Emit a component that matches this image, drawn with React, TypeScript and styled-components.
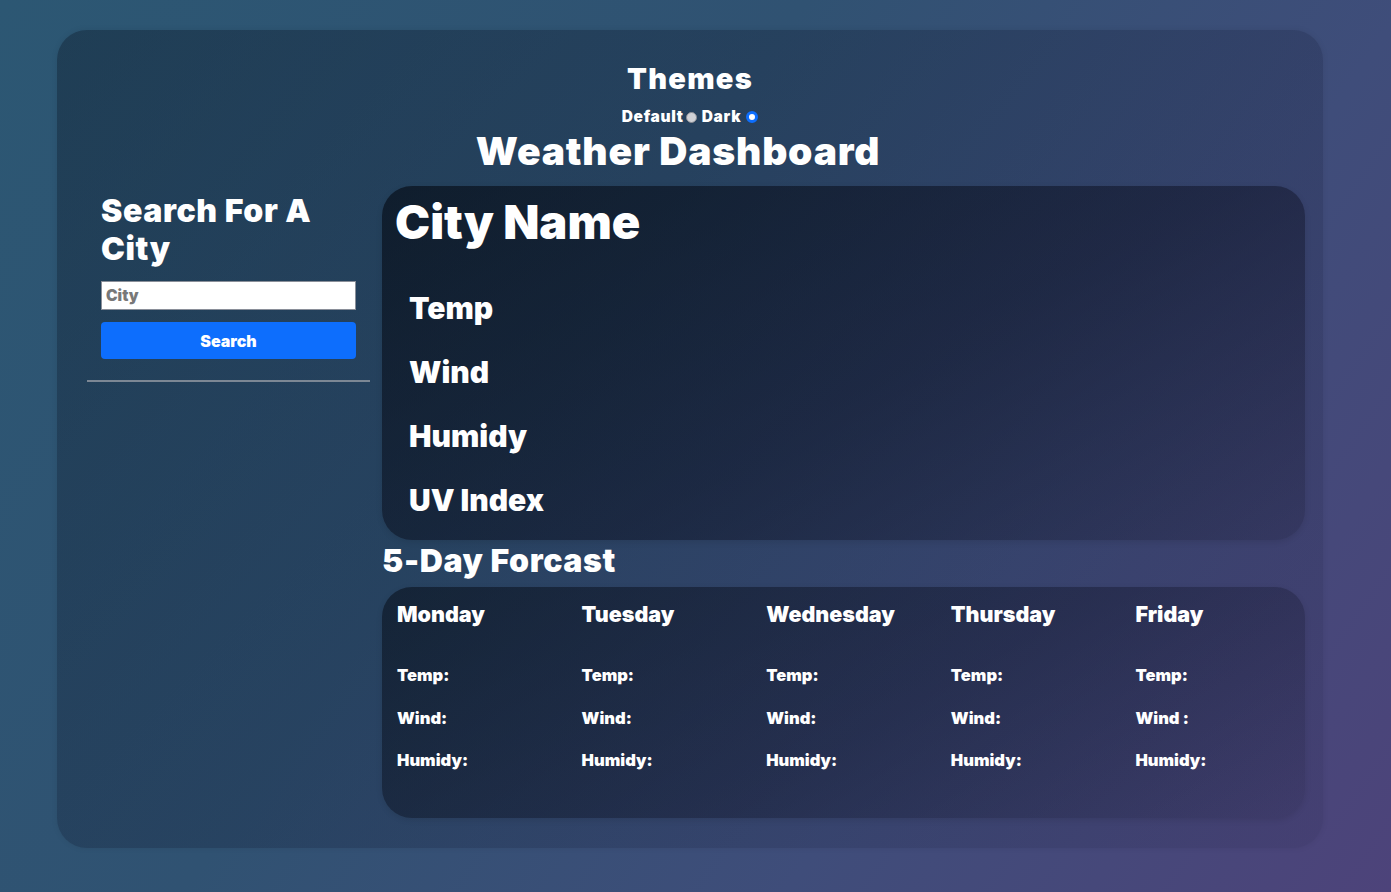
import React, {useState} from 'react';
import styled, {createGlobalStyle} from 'styled-components';

const GlobalStyle = createGlobalStyle`
    html, body {
        margin: 0;
        padding: 0;
    }
    body {
        min-height: 892px;
        font-family: Inter, "Liberation Sans", sans-serif;
        font-weight: 900;
        color: #ffffff;
        background: linear-gradient(125deg, #2c5773 0%, #305272 40%, #3f4d7a 70%, #4d437a 100%);
    }
`;

const Page = styled.div`
    padding: 30px 68px 44px 57px;
`;

const Glass = styled.main`
    border-radius: 30px;
    background: linear-gradient(135deg, rgba(8, 18, 32, 0.36) 0%, rgba(10, 16, 40, 0.22) 50%, rgba(20, 20, 50, 0.1) 100%);
    box-shadow: 0 0 6px rgba(0, 0, 0, 0.08);
    padding: 31px 18px 30px;
`;

const Header = styled.header`
    display: flex;
    flex-direction: column;
    align-items: center;
`;

const ThemesTitle = styled.h3`
    margin: 0;
    font-size: 29px;
    line-height: 36px;
    font-weight: 900;
    letter-spacing: 1.3px;
`;

const ThemeRow = styled.div`
    display: flex;
    align-items: center;
    margin-top: 10px;
    font-size: 15.5px;
    line-height: 20px;
    letter-spacing: 0.7px;
`;

const ThemeOption = styled.label`
    display: flex;
    align-items: center;
    gap: 1px;
    margin-right: 5px;
    cursor: pointer;

    &:last-child {
        margin-right: 0;
    }
`;

const HiddenRadio = styled.input`
    display: none;
`;

const RadioDot = styled.span<{$checked: boolean}>`
    display: inline-block;
    flex-shrink: 0;
    width: ${({$checked}) => $checked ? '12px' : '11px'};
    height: ${({$checked}) => $checked ? '12px' : '11px'};
    margin-left: ${({$checked}) => $checked ? '4px' : '1px'};
    border-radius: 50%;
    box-sizing: border-box;
    border: ${({$checked}) => $checked ? '3px solid #0d6efd' : '1px solid #8d8f96'};
    background: ${({$checked}) => $checked ? '#ffffff' : '#d0d1d6'};
`;

const Title = styled.h1`
    margin: 1px 24px 0 0;
    font-size: 39px;
    line-height: 46px;
    font-weight: 900;
    letter-spacing: 0.8px;
`;

const Body = styled.div`
    display: grid;
    grid-template-columns: 283px 1fr;
    column-gap: 12px;
    margin-top: 12px;
    padding-left: 12px;
`;

const Side = styled.aside`
    display: flex;
    flex-direction: column;
`;

const SideInner = styled.div`
    display: flex;
    flex-direction: column;
    padding: 0 14px;
`;

const SideTitle = styled.h2`
    margin: 6px 0 13px;
    font-size: 32px;
    line-height: 38px;
    font-weight: 900;
    letter-spacing: 0.6px;
`;

const CityInput = styled.input`
    height: 29px;
    box-sizing: border-box;
    border: 1px solid #8a8f99;
    padding: 0 4px;
    font-family: Inter, "Liberation Sans", sans-serif;
    font-weight: 900;
    font-size: 15.5px;
    color: #222;
    background: #fff;

    &::placeholder {
        color: #787878;
    }
`;

const SearchButton = styled.button`
    margin-top: 12px;
    height: 37px;
    border: none;
    border-radius: 4px;
    background: #0d6efd;
    color: #fff;
    font-family: Inter, "Liberation Sans", sans-serif;
    font-weight: 900;
    font-size: 16px;
`;

const Divider = styled.hr`
    width: 100%;
    margin: 21px 0 0;
    border: none;
    border-top: 2px solid #7c8794;
`;

const Main = styled.section`
    display: flex;
    flex-direction: column;
`;

const Card = styled.div<{$shade: number}>`
    border-radius: 30px;
    background: linear-gradient(150deg,
        rgba(2, 6, 14, ${({$shade}) => $shade}) 0%,
        rgba(8, 10, 26, ${({$shade}) => $shade - 0.15}) 55%,
        rgba(20, 20, 40, ${({$shade}) => $shade - 0.4}) 100%);
    box-shadow: 0 2px 6px rgba(0, 0, 0, 0.1);
`;

const CurrentCard = styled(Card)`
    padding: 6px 13px 18px;
    height: 354px;
    box-sizing: border-box;
`;

const CityName = styled.h1`
    margin: 0 0 24px;
    font-size: 47px;
    line-height: 60px;
    font-weight: 900;
`;

const Stat = styled.h2`
    margin: 0 0 0 14px;
    font-size: 30px;
    line-height: 64px;
    font-weight: 900;
`;

const ForecastTitle = styled.h2`
    margin: 0;
    padding: 3px 0 8px;
    font-size: 32px;
    line-height: 36px;
    font-weight: 900;
    letter-spacing: 0.6px;
`;

const ForecastCard = styled(Card)`
    display: grid;
    grid-template-columns: repeat(5, 1fr);
    height: 231px;
    box-sizing: border-box;
    padding-top: 10px;
`;

const Day = styled.div`
    padding: 0 15px;
`;

const DayName = styled.h4`
    margin: 0 0 23px;
    font-size: 21.5px;
    line-height: 34px;
    font-weight: 900;
`;

const DayStat = styled.p`
    margin: 0;
    font-size: 16.5px;
    line-height: 42.5px;
    font-weight: 900;
`;

const days = ['Monday', 'Tuesday', 'Wednesday', 'Thursday', 'Friday'];
const themes = [
    {id: 'default', label: 'Default'},
    {id: 'dark', label: 'Dark'},
];

export default function App() {
    const [theme, setTheme] = useState('dark');

    return (
        <Page>
            <GlobalStyle />
            <Glass>
                <Header>
                    <ThemesTitle>Themes</ThemesTitle>
                    <ThemeRow>
                        {themes.map(t => (
                            <ThemeOption key={t.id}>
                                {t.label}
                                <HiddenRadio
                                    type="radio"
                                    name="theme"
                                    checked={theme === t.id}
                                    onChange={() => setTheme(t.id)}
                                />
                                <RadioDot $checked={theme === t.id} />
                            </ThemeOption>
                        ))}
                    </ThemeRow>
                    <Title>Weather Dashboard</Title>
                </Header>
                <Body>
                    <Side>
                        <SideInner>
                            <SideTitle>Search For A City</SideTitle>
                            <CityInput placeholder="City" />
                            <SearchButton>Search</SearchButton>
                        </SideInner>
                        <Divider />
                    </Side>
                    <Main>
                        <CurrentCard $shade={0.6}>
                            <CityName>City Name</CityName>
                            <Stat>Temp</Stat>
                            <Stat>Wind</Stat>
                            <Stat>Humidy</Stat>
                            <Stat>UV Index</Stat>
                        </CurrentCard>
                        <ForecastTitle>5-Day Forcast</ForecastTitle>
                        <ForecastCard $shade={0.5}>
                            {days.map((day, i) => (
                                <Day key={day}>
                                    <DayName>{day}</DayName>
                                    <DayStat>Temp:</DayStat>
                                    <DayStat>{i === 4 ? 'Wind :' : 'Wind:'}</DayStat>
                                    <DayStat>Humidy:</DayStat>
                                </Day>
                            ))}
                        </ForecastCard>
                    </Main>
                </Body>
            </Glass>
        </Page>
    );
}
